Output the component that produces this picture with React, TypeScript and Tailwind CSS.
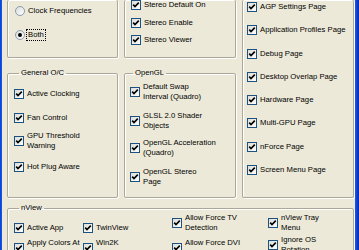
import React from 'react';

const groupBorder = 'border border-[#aca899] shadow-[inset_1px_1px_0_#fff,1px_1px_0_#fff] rounded-[2px]';

function Check() {
  return (
    <span className="flex h-[10px] w-[10px] shrink-0 items-center justify-center border border-[#1c5180] bg-gradient-to-br from-[#dcdcd7] to-white">
      <svg width="8" height="8" viewBox="0 0 8 8">
        <path d="M1.2 3.6 L3 5.6 L6.8 1.6" stroke="#000" strokeWidth="1.6" fill="none" />
      </svg>
    </span>
  );
}

function Radio({ checked }: { checked?: boolean }) {
  return (
    <span className="flex h-[10px] w-[10px] shrink-0 items-center justify-center rounded-full border border-[#8a9bb0] bg-gradient-to-br from-[#dcdcd7] to-white">
      {checked && <span className="h-[4px] w-[4px] rounded-full bg-black" />}
    </span>
  );
}

function Item({ lines, className = '' }: { lines: string[]; className?: string }) {
  return (
    <div className={`flex items-center gap-[3px] ${className}`}>
      <Check />
      <div className="leading-[10px] whitespace-nowrap">
        {lines.map((l, i) => (
          <div key={i} className="h-[10px]">{l}</div>
        ))}
      </div>
    </div>
  );
}

export default function App() {
  return (
    <div className="flex h-[250px] w-[359px] overflow-hidden bg-[#ece9d8] font-['Liberation_Sans',Arial,sans-serif] text-[7.7px] text-black">
      <div className="w-[2px] shrink-0 bg-gradient-to-r from-[#0a3fd0] to-[#1a5ae8]" />
      <div className="flex-1 pl-[5px] pr-[1px]">
        <div className="grid grid-cols-[111px_112px_112px] grid-rows-[58px_140px] gap-x-[6px]">
          {/* clock group */}
          <div className={`${groupBorder} border-t-0 flex flex-col gap-[13px] pl-[7px] pt-[6px]`}>
            <div className="flex items-center gap-[3px]">
              <Radio />
              <span className="leading-[10px]">Clock Frequencies</span>
            </div>
            <div className="flex items-center gap-[1px]">
              <Radio checked />
              <span className="border border-dotted border-black px-[1px] leading-[10px]">Both</span>
            </div>
          </div>

          {/* stereo group */}
          <div className={`${groupBorder} border-t-0 flex flex-col gap-[7.5px] pl-[6px]`}>
            <Item lines={['Stereo Default On']} />
            <Item lines={['Stereo Enable']} />
            <Item lines={['Stereo Viewer']} />
          </div>

          {/* pages group */}
          <div className={`${groupBorder} border-t-0 row-span-2 flex flex-col gap-[13.3px] pl-[4px] pt-[2px]`}>
            <Item lines={['AGP Settings Page']} />
            <Item lines={['Application Profiles Page']} />
            <Item lines={['Debug Page']} />
            <Item lines={['Desktop Overlap Page']} />
            <Item lines={['Hardware Page']} />
            <Item lines={['Multi-GPU Page']} />
            <Item lines={['nForce Page']} />
            <Item lines={['Screen Menu Page']} />
          </div>

          <fieldset className={`${groupBorder} col-start-1 row-start-2 mt-[10px] h-[130px] pl-[6px]`}>
            <legend className="ml-[5px] px-[2px] leading-[10px]">General O/C</legend>
            <Item lines={['Active Clocking']} className="mt-[11px]" />
            <Item lines={['Fan Control']} className="mt-[14px]" />
            <Item lines={['GPU Threshold', 'Warning']} className="mt-[8px]" />
            <Item lines={['Hot Plug Aware']} className="mt-[11px]" />
          </fieldset>

          <fieldset className={`${groupBorder} col-start-2 row-start-2 mt-[10px] h-[130px] pl-[5px]`}>
            <legend className="ml-[3px] px-[2px] leading-[10px]">OpenGL</legend>
            <Item lines={['Default Swap', 'Interval (Quadro)']} className="mt-[4px]" />
            <Item lines={['GLSL 2.0 Shader', 'Objects']} className="mt-[9px]" />
            <Item lines={['OpenGL Acceleration', '(Quadro)']} className="mt-[7px]" />
            <Item lines={['OpenGL Stereo', 'Page']} className="mt-[9px]" />
          </fieldset>
        </div>

        <fieldset className={`${groupBorder} mt-[5px] h-[60px] pl-[6px]`}>
          <legend className="ml-[5px] px-[2px] leading-[10px]">nView</legend>
          <div className="grid grid-cols-[69px_89px_96px_1fr] items-start">
            <Item lines={['Active App']} className="mt-[10px]" />
            <Item lines={['TwinView']} className="mt-[10px]" />
            <Item lines={['Allow Force TV', 'Detection']} />
            <Item lines={['nView Tray', 'Menu']} />
            <Item lines={['Apply Colors At', '']} className="mt-[5px]" />
            <Item lines={['Win2K', '']} className="mt-[5px]" />
            <Item lines={['Allow Force DVI', '']} className="mt-[5px]" />
            <Item lines={['Ignore OS', 'Rotation']} className="mt-[2px]" />
          </div>
        </fieldset>
      </div>
      <div className="w-[4px] shrink-0 bg-gradient-to-r from-[#1a5ae8] to-[#0527b5]" />
    </div>
  );
}
